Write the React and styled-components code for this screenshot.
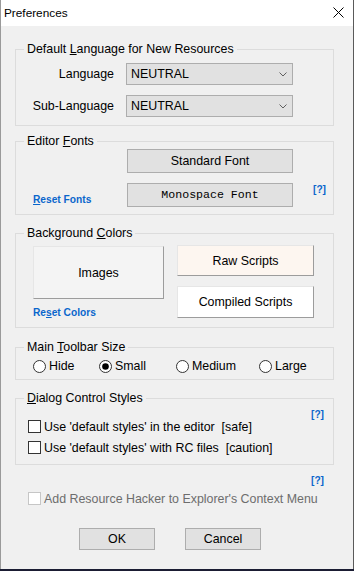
import React from "react";
import styled, { createGlobalStyle } from "styled-components";

const Global = createGlobalStyle`
  html, body { margin: 0; padding: 0; background: #1b1d33; }
  body { font-family: "Liberation Sans", Arial, sans-serif; }
  * { box-sizing: border-box; }
`;

const Window = styled.div`
  width: 354px;
  height: 569px;
  background: #f0f0f0;
  border-left: 1px solid #9a9a9a;
  border-right: 1px solid #5a5a5a;
  display: flex;
  flex-direction: column;
  font-family: "Liberation Sans", Arial, sans-serif;
  font-size: 12.4px;
  color: #000;
`;

const TitleBar = styled.div`
  height: 26px;
  flex: none;
  background: #fff;
  display: flex;
  align-items: center;
  justify-content: space-between;
  padding: 0 9px 1px 3px;
`;

const Title = styled.span`
  font-size: 11.8px;
  color: #000;
`;

const Body = styled.div`
  padding: 16px 19px 0 14px;
  display: flex;
  flex-direction: column;
`;

const Group = styled.fieldset`
  margin: ${(p) => p.$mt || 0}px 0 0 0;
  padding: 0;
  border: 1px solid #dcdcdc;
  min-width: 0;
`;

const Legend = styled.legend`
  margin-left: 8px;
  padding: 0 3px;
  line-height: 14px;
  font-size: 12.4px;
`;

const LangGrid = styled.div`
  display: grid;
  grid-template-columns: 98px 167px;
  column-gap: 12px;
  row-gap: 10px;
  align-items: center;
  padding: 7px 0 8px;
`;

const Label = styled.span`
  text-align: right;
  line-height: 14px;
`;

const Combo = styled.div`
  height: 22px;
  border: 1px solid #adadad;
  background: #e1e1e1;
  display: flex;
  align-items: center;
  justify-content: space-between;
  padding: 0 5px 0 4px;
  line-height: 14px;
`;

const FontsGrid = styled.div`
  display: grid;
  grid-template-columns: 111px 166px 1fr;
  grid-template-rows: 24px 24px;
  row-gap: 10px;
  padding: 1px 0 7px;
`;

const PushButton = styled.div`
  height: ${(p) => p.$h || 24}px;
  width: ${(p) => (p.$w ? p.$w + "px" : "auto")};
  border: 1px solid #adadad;
  background: #e1e1e1;
  display: flex;
  align-items: center;
  justify-content: center;
  font-family: ${(p) =>
    p.$mono
      ? '"Liberation Mono", "Courier New", monospace'
      : '"Liberation Sans", Arial, sans-serif'};
  font-size: ${(p) => (p.$mono ? "11.6px" : "12.4px")};
  line-height: 14px;
`;

const LinkText = styled.span`
  color: #0a66cc;
  font-weight: bold;
  font-size: 10.2px;
  line-height: 12px;
  white-space: nowrap;
`;

const FontsLink = styled(LinkText)`
  grid-column: 1;
  grid-row: 2;
  align-self: end;
  padding-left: 17px;
  margin-bottom: 1px;
`;

const FontsHelp = styled(LinkText)`
  grid-column: 3;
  grid-row: 2;
  padding: 1px 0 0 20px;
`;

const ColorsGrid = styled.div`
  display: grid;
  grid-template-columns: 131px 137px;
  column-gap: 13px;
  padding: 5px 0 8px 17px;
`;

const Column = styled.div`
  display: flex;
  flex-direction: column;
  gap: ${(p) => p.$gap || 0}px;
`;

const Swatch = styled.div`
  height: ${(p) => p.$h}px;
  margin-top: ${(p) => p.$mt || 0}px;
  background: ${(p) => p.$bg};
  border-top: 1px solid #e6e6e6;
  border-left: 1px solid #e6e6e6;
  border-right: 1px solid #9c9c9c;
  border-bottom: 1px solid #9c9c9c;
  display: flex;
  align-items: center;
  justify-content: center;
  line-height: 14px;
`;

const ColorsLink = styled(LinkText)`
  margin-top: 8px;
`;

const RadioRow = styled.div`
  display: grid;
  grid-template-columns: 66px 77px 83px auto;
  padding: 5px 0 6px 17px;
`;

const Choice = styled.label`
  display: flex;
  align-items: center;
  gap: 3px;
  line-height: 14px;
  color: ${(p) => (p.$disabled ? "#6d6d6d" : "#000")};
`;

const HelpRow = styled.div`
  display: flex;
  justify-content: flex-end;
  padding-right: ${(p) => p.$pr}px;
  margin-top: ${(p) => p.$mt || 0}px;
  line-height: 10px;
  height: 10px;
`;

const HelpLink = styled(LinkText)`
  line-height: 10px;
`;

const StylesBox = styled.div`
  display: flex;
  flex-direction: column;
  padding: 5px 0 10px 12px;
`;

const CheckList = styled.div`
  display: flex;
  flex-direction: column;
  gap: 8px;
`;

const CheckRow = styled(Choice)`
  height: 13px;
  gap: 3px;
`;

const Footer = styled.div`
  display: flex;
  flex-direction: column;
`;

const FooterCheck = styled.div`
  margin-top: 6px;
  padding-left: 13px;
`;

const ButtonRow = styled.div`
  display: flex;
  gap: 30px;
  margin-top: 23px;
  padding-left: 64px;
`;

const Spaced = styled.span`
  white-space: pre;
`;

function Chevron() {
  return (
    <svg width="8" height="5" viewBox="0 0 8 5">
      <path d="M0.5 0.5 L4 4 L7.5 0.5" fill="none" stroke="#5f5f5f" strokeWidth="1" />
    </svg>
  );
}

function CloseIcon() {
  return (
    <svg width="11" height="11" viewBox="0 0 11 11">
      <path d="M0.5 0.5 L10.5 10.5 M10.5 0.5 L0.5 10.5" stroke="#000" strokeWidth="1" />
    </svg>
  );
}

function Radio({ checked }) {
  return (
    <svg width="13" height="13" viewBox="0 0 13 13">
      <circle cx="6.5" cy="6.5" r="6" fill="#fff" stroke="#333" strokeWidth="1" />
      {checked && <circle cx="6.5" cy="6.5" r="3.3" fill="#000" />}
    </svg>
  );
}

function Check({ disabled }) {
  return (
    <svg width="13" height="13" viewBox="0 0 13 13">
      <rect
        x="0.5"
        y="0.5"
        width="12"
        height="12"
        fill="#fff"
        stroke={disabled ? "#c6c6c6" : "#333"}
        strokeWidth="1"
      />
    </svg>
  );
}

export default function App() {
  return (
    <>
      <Global />
      <Window>
        <TitleBar>
          <Title>Preferences</Title>
          <CloseIcon />
        </TitleBar>
        <Body>
          <Group>
            <Legend>
              Default <u>L</u>anguage for New Resources
            </Legend>
            <LangGrid>
              <Label>Language</Label>
              <Combo>
                <span>NEUTRAL</span>
                <Chevron />
              </Combo>
              <Label>Sub-Language</Label>
              <Combo>
                <span>NEUTRAL</span>
                <Chevron />
              </Combo>
            </LangGrid>
          </Group>

          <Group $mt={8}>
            <Legend>
              Editor <u>F</u>onts
            </Legend>
            <FontsGrid>
              <PushButton style={{ gridColumn: 2, gridRow: 1 }}>Standard Font</PushButton>
              <FontsLink>
                <u>R</u>eset Fonts
              </FontsLink>
              <PushButton $mono style={{ gridColumn: 2, gridRow: 2 }}>
                Monospace Font
              </PushButton>
              <FontsHelp>[?]</FontsHelp>
            </FontsGrid>
          </Group>

          <Group $mt={11}>
            <Legend>
              Background <u>C</u>olors
            </Legend>
            <ColorsGrid>
              <Column>
                <Swatch $h={53} $mt={1} $bg="#f4f4f4">
                  Images
                </Swatch>
                <ColorsLink>
                  Re<u>s</u>et Colors
                </ColorsLink>
              </Column>
              <Column $gap={10}>
                <Swatch $h={31} $bg="#fdf6f0">
                  Raw Scripts
                </Swatch>
                <Swatch $h={32} $bg="#ffffff">
                  Compiled Scripts
                </Swatch>
              </Column>
            </ColorsGrid>
          </Group>

          <Group $mt={12}>
            <Legend>
              Main <u>T</u>oolbar Size
            </Legend>
            <RadioRow>
              <Choice>
                <Radio />
                Hide
              </Choice>
              <Choice>
                <Radio checked />
                Small
              </Choice>
              <Choice>
                <Radio />
                Medium
              </Choice>
              <Choice>
                <Radio />
                Large
              </Choice>
            </RadioRow>
          </Group>

          <Group $mt={11}>
            <Legend>
              <u>D</u>ialog Control Styles
            </Legend>
            <StylesBox>
              <HelpRow $pr={9}>
                <HelpLink>[?]</HelpLink>
              </HelpRow>
              <CheckList>
                <CheckRow>
                  <Check />
                  <Spaced>Use 'default styles' in the editor  [safe]</Spaced>
                </CheckRow>
                <CheckRow>
                  <Check />
                  <Spaced>Use 'default styles' with RC files  [caution]</Spaced>
                </CheckRow>
              </CheckList>
            </StylesBox>
          </Group>

          <Footer>
            <HelpRow $pr={10} $mt={11}>
              <HelpLink>[?]</HelpLink>
            </HelpRow>
            <FooterCheck>
              <CheckRow $disabled>
                <Check disabled />
                Add Resource Hacker to Explorer's Context Menu
              </CheckRow>
            </FooterCheck>
            <ButtonRow>
              <PushButton $w={76} $h={22}>OK</PushButton>
              <PushButton $w={76} $h={22}>Cancel</PushButton>
            </ButtonRow>
          </Footer>
        </Body>
      </Window>
    </>
  );
}
